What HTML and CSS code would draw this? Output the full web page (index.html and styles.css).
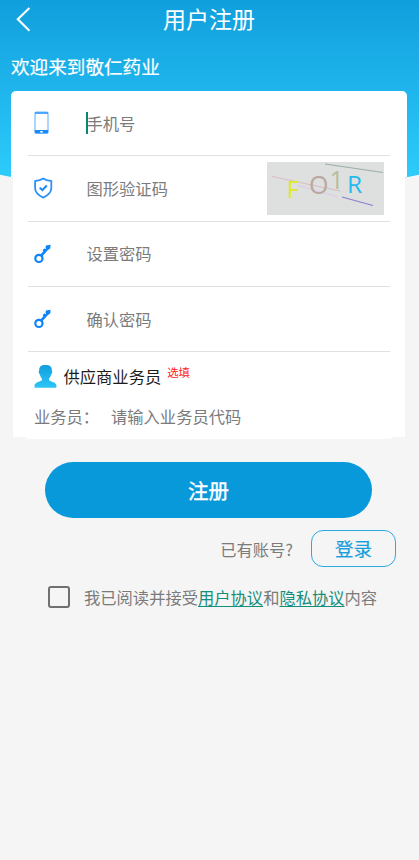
FILE: index.html
```html
<!DOCTYPE html>
<html lang="zh-CN">
<head>
<meta charset="utf-8">
<meta name="viewport" content="width=device-width, initial-scale=1">
<title>用户注册</title>
<link rel="stylesheet" href="styles.css">
</head>
<body>
<svg class="defs" width="0" height="0" aria-hidden="true">
  <symbol id="key" viewBox="0 0 18 20">
    <circle cx="4.9" cy="14.4" r="3.6" fill="none" stroke="#0d84fb" stroke-width="2.2"/>
    <path d="M7.2 11.7 15.3 2.5" fill="none" stroke="#0d84fb" stroke-width="2.6"/>
    <path d="M10.2 4.2 12.6 6.6 11 8.6 8.6 6.4zM12 1.4l4.6-.6-.4 3.6-2 1.4-2.8-2.2z" fill="#0d84fb"/>
  </symbol>
</svg>
<main class="page">
  <header class="bar">
    <svg class="back" viewBox="0 0 16 26"><path d="M14.4 2 2.8 13.2 14.4 24.8" fill="none" stroke="#fff" stroke-width="2.1"/></svg>
    <h1>用户注册</h1>
  </header>
  <p class="welcome">欢迎来到敬仁药业</p>

  <form class="card">
    <div class="row">
      <svg class="icon" viewBox="0 0 18 24">
        <rect x="1" y="1" width="13" height="21" rx="1.3" fill="#fff" stroke="#74bbff" stroke-width="1.2"/>
        <path d="M1 2h13" stroke="#3e9fff" stroke-width="1.8"/>
        <path d="M.8 19h13.4v2.3q0 1.2-1.2 1.2H2q-1.2 0-1.2-1.2z" fill="#188bfc"/>
        <path d="M6.3 20.8h2.4" stroke="#fff" stroke-width="1.6"/>
      </svg>
      <span class="label caret">手机号</span>
    </div>
    <div class="row">
      <svg class="icon shield" viewBox="0 0 19 22">
        <path d="M9.2 1.4Q13.2 4 17.3 4v7.2q0 5.4-8.1 9.4-8.1-4-8.1-9.4V4Q5.2 4 9.2 1.4z" fill="none" stroke="#2b92fb" stroke-width="1.8" stroke-linejoin="round"/>
        <path d="m5.7 10.6 2.7 2.6 4.4-4.7" fill="none" stroke="#1687fb" stroke-width="2"/>
      </svg>
      <span class="label">图形验证码</span>
      <svg class="captcha" viewBox="0 0 117 53">
        <rect width="117" height="53" fill="#dedfdf"/>
        <g fill="none" stroke-width="1.2">
          <path d="M58 2l58 8.5" stroke="#9bb0a5"/>
          <path d="M5 14.5 73 29" stroke="#d8bcc7"/>
          <path d="M31 23.5 71 35" stroke="#dfc9e8"/>
          <path d="M75 35 106 43.500" stroke="#8781d0"/>
        </g>
        <text x="19.8" y="36.2" font-size="24" fill="#deeb25">F</text>
        <text x="42" y="31.8" font-size="25" fill="#b8a99f">O</text>
        <text x="62.5" y="27" font-size="25" fill="#b8bd98">1</text>
        <text x="80" y="31.4" font-size="24.500" fill="#24baf0">R</text>
      </svg>
    </div>
    <div class="row">
      <svg class="icon key"><use href="#key"/></svg>
      <span class="label">设置密码</span>
    </div>
    <div class="row">
      <svg class="icon key"><use href="#key"/></svg>
      <span class="label">确认密码</span>
    </div>
    <div class="agent-head">
      <svg class="person" viewBox="0 0 23 23">
        <defs><linearGradient id="pg" x1="0" y1="0" x2="0" y2="1"><stop offset="0" stop-color="#109fdd"/><stop offset="1" stop-color="#2cc6f6"/></linearGradient></defs>
        <path d="M11.5 0C16 0 18 1.8 17.8 5.5c.8.2.5 3.5-.6 3.800-.4 2-1.200 3.300-2.100 4.200v1.700c1.500 1.400 7.400 1.800 7.400 5.800 0 1.300-.2 1.800-1 1.800H1.500c-.8 0-1-.5-1-1.800 0-4 5.900-4.400 7.400-5.800v-1.700C7 12.600 6.200 11.300 5.800 9.300 4.700 9 4.400 5.700 5.200 5.500 5 1.800 7 0 11.500 0z" fill="url(#pg)"/>
      </svg>
      <span class="agent-title">供应商业务员</span>
      <span class="optional">选填</span>
    </div>
    <div class="agent-code"><span class="agent-label">业务员：</span><span>请输入业务员代码</span></div>
  </form>

  <button class="submit" type="button">注册</button>
  <div class="login-line"><span>已有账号?</span><button class="login" type="button">登录</button></div>
  <div class="terms"><span class="check"></span><p>我已阅读并接受<a>用户协议</a>和<a>隐私协议</a>内容</p></div>
</main>
</body>
</html>
```

FILE: styles.css
```css
* { box-sizing: border-box; }
body {
  margin: 0;
  background: #f5f5f5;
  color: #7b7b7b;
  font: 16.3px/24px "Noto Sans CJK SC", sans-serif;
}
h1, p { margin: 0; font-weight: 400; }
svg { display: block; flex: none; }
.defs { position: absolute; }
.page {
  position: relative;
  height: 860px;
  overflow: hidden;
  isolation: isolate;
}
/* Blue backdrop with a shallow curved lower edge */
.page::before {
  content: "";
  position: absolute;
  z-index: -2;
  top: 0;
  left: -20px;
  right: -20px;
  height: 189px;
  background: linear-gradient(#109fdd, #2ecbfb 178px);
  border-radius: 0 0 50% 50% / 0 0 24px 24px;
}
.bar {
  display: flex;
  align-items: center;
  height: 38px;
  padding-left: 15px;
}
.back { width: 16px; height: 26px; }
.bar h1 {
  flex: 1;
  padding-right: 32px;
  text-align: center;
  color: #fff;
  font-size: 23px;
  line-height: 36px;
  margin-top: -2px;
}
.welcome {
  margin: 14px 0 0 11px;
  height: 39px;
  line-height: 28px;
  color: #fff;
  font-size: 18.6px;
  -webkit-text-stroke: 0.2px;
}
.card {
  position: relative;
  width: 392px;
  height: 346px;
  margin-left: 13px;
  padding: 0 15px;
  background: #fff;
  border-radius: 5px 5px 0 0;
}
.card::before, .card::after {
  content: "";
  position: absolute;
  z-index: -1;
  background: #fff;
}
.card::before {
  top: 0;
  left: -2px;
  right: -2px;
  height: 86px;
  border-radius: 5px 5px 0 0;
}
.card::after {
  bottom: -2px;
  left: 11px;
  right: 11px;
  height: 8px;
  border-radius: 0 0 5px 5px;
}
.row {
  display: flex;
  align-items: center;
  height: 65.3px;
  border-bottom: 1px solid #e0e0e0;
}
.icon { width: 18px; height: 24px; margin-left: 6px; }
.shield { width: 19px; height: 22px; margin-right: -1px; }
.key { height: 20px; }
.label { margin: -1px 0 0 34.5px; }
.caret { position: relative; }
.caret::before {
  content: "";
  position: absolute;
  left: -0.5px;
  top: 1px;
  width: 2px;
  height: 22px;
  background: #098775;
}
.captcha {
  width: 117px;
  height: 53px;
  margin: 0 6px 0 auto;
  font-family: "Open Sans", sans-serif;
}
.agent-head {
  display: flex;
  align-items: center;
  height: 48px;
  padding-left: 6px;
}
.person { width: 23px; height: 23px; }
.agent-title { margin: -1px 0 0 6.5px; color: #1c1c1c; }
.optional {
  margin: -9px 0 0 6px;
  color: #ff1a1a;
  font-size: 11.4px;
}
.agent-code { display: flex; padding-left: 6px; margin-top: 4px; }
.agent-label { width: 77px; }
.submit {
  display: block;
  width: 327px;
  height: 56px;
  margin: 25px 0 0 45px;
  padding: 0;
  border: 0;
  border-radius: 28px;
  background: #0899db;
  color: #fff;
  font: 400 20.5px/56px "Noto Sans CJK SC", sans-serif;
  -webkit-text-stroke: 0.4px;
}
.login-line {
  display: flex;
  align-items: center;
  justify-content: flex-end;
  gap: 18px;
  margin: 12px 23px 0 0;
}
.login {
  width: 85px;
  height: 37px;
  padding: 0 0 2px;
  border: 1.5px solid #2baae2;
  border-radius: 12px;
  background: transparent;
  color: #159fdc;
  font: 400 18.5px/32px "Noto Sans CJK SC", sans-serif;
  -webkit-text-stroke: 0.2px;
}
.terms {
  display: flex;
  align-items: center;
  margin: 18px 0 0 48px;
}
.check {
  width: 22px;
  height: 22px;
  margin-right: 14px;
  border: 2px solid #707070;
  border-radius: 3px;
}
.terms a {
  color: #158f7d;
  text-decoration: underline;
  text-underline-offset: 2px;
}
```
